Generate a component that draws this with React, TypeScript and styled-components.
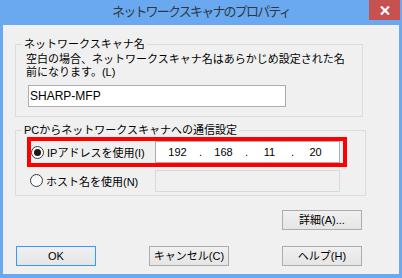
import React, { useState } from 'react';
import styled, { createGlobalStyle } from 'styled-components';

const GlobalStyle = createGlobalStyle`
  html, body {
    margin: 0;
    padding: 0;
    background: #ffffff;
  }
  body {
    font-family: "Liberation Sans", "Noto Sans CJK JP", sans-serif;
    font-size: 11px;
    color: #000000;
  }
`;

const Frame = styled.div`
  width: 402px;
  height: 278px;
  box-sizing: border-box;
  background: #6aa9f0;
  padding: 0 3px 4px 3px;
  display: flex;
  flex-direction: column;
`;

const TitleBar = styled.div`
  height: 25px;
  display: flex;
  align-items: flex-start;
  justify-content: center;
  position: relative;
`;

const Title = styled.div`
  font-family: "Noto Sans CJK JP", sans-serif;
  font-size: 13px;
  letter-spacing: -1.8px;
  line-height: 22px;
  color: #2e3844;
  margin-left: 0;
`;

const CloseButton = styled.div`
  position: absolute;
  top: 0;
  right: -1px;
  width: 31px;
  height: 20px;
  background: #c75050;
  display: flex;
  align-items: center;
  justify-content: center;
`;

const Client = styled.div`
  flex: 1;
  background: #f0f0f0;
  padding: 0 0 0 12px;
  display: flex;
  flex-direction: column;
`;

const Group = styled.fieldset<{ $width: number; $top: number }>`
  margin: ${p => p.$top}px 0 0 0;
  padding: 0;
  width: ${p => p.$width}px;
  box-sizing: border-box;
  border: 1px solid #dcdcdc;
  min-width: 0;
`;

const Legend = styled.legend`
  margin-left: 6px;
  padding: 0 2px;
  line-height: 14px;
  font-size: 11px;
`;

const Desc = styled.div`
  margin: 2px 0 0 10px;
  line-height: 13px;
  white-space: nowrap;
`;

const TextField = styled.input`
  display: block;
  margin: 6px 0 9px 12px;
  width: 258px;
  height: 22px;
  box-sizing: border-box;
  border: 1px solid #abadb3;
  background: #ffffff;
  padding: 0 0 0 1px;
  font-family: "Liberation Sans", sans-serif;
  font-size: 12px;
  color: #000;
  outline: none;
`;

const Row = styled.div<{ $highlight?: boolean }>`
  display: flex;
  align-items: center;
  justify-content: space-between;
  box-sizing: border-box;
  ${p => p.$highlight
    ? `
    margin-left: 11px;
    width: 320px;
    height: 30px;
    border: 4px solid #ff0000;
    padding-right: 3px;
  `
    : `
    margin: 2px 0 3px 14px;
    width: 310px;
    height: 23px;
  `}
`;

const RadioLabel = styled.label`
  display: flex;
  align-items: center;
  gap: 3px;
  cursor: default;
  white-space: nowrap;
`;

const RadioCircle = styled.span<{ $checked: boolean }>`
  width: 13px;
  height: 13px;
  box-sizing: border-box;
  border-radius: 50%;
  border: 1px solid #3c3c3c;
  background: linear-gradient(#f4f4f4, #ffffff);
  display: flex;
  align-items: center;
  justify-content: center;
  &::after {
    content: '';
    width: 7px;
    height: 7px;
    border-radius: 50%;
    background: ${p => (p.$checked ? '#1a1a1a' : 'transparent')};
  }
`;

const IpField = styled.div<{ $disabled?: boolean }>`
  width: 185px;
  height: 22px;
  box-sizing: border-box;
  border: 1px solid ${p => (p.$disabled ? '#d9d9d9' : '#abadb3')};
  background: ${p => (p.$disabled ? '#f0f0f0' : '#ffffff')};
  display: grid;
  grid-template-columns: 43px 3px 43px 3px 43px 3px 43px;
  align-items: center;
  font-family: "Liberation Sans", sans-serif;
  font-size: 11px;
`;

const Octet = styled.span`
  text-align: center;
`;

const Dot = styled.span`
  text-align: center;
`;

const DetailRow = styled.div`
  display: flex;
  justify-content: flex-end;
  width: 347px;
  margin-top: 14px;
`;

const ButtonRow = styled.div`
  display: flex;
  justify-content: space-between;
  width: 346px;
  margin: 16px 0 0 1px;
`;

const Button = styled.button<{ $default?: boolean }>`
  width: 80px;
  height: 20px;
  box-sizing: border-box;
  border: 1px solid ${p => (p.$default ? '#3399ff' : '#acacac')};
  background: linear-gradient(#f0f0f0, #e5e5e5);
  font-family: "Liberation Sans", "Noto Sans CJK JP", sans-serif;
  font-size: 11px;
  color: #000;
  padding: 0;
  line-height: 18px;
`;

function RadioOption(props: { checked: boolean; label: string; onSelect: () => void }) {
  return (
    <RadioLabel onClick={props.onSelect}>
      <RadioCircle $checked={props.checked} />
      <span>{props.label}</span>
    </RadioLabel>
  );
}

function AddressBox(props: { octets?: string[]; disabled?: boolean }) {
  const octets = props.octets || ['', '', '', ''];
  return (
    <IpField $disabled={props.disabled}>
      {octets.map((o, i) => (
        <React.Fragment key={i}>
          {i > 0 && <Dot>{props.disabled ? '' : '.'}</Dot>}
          <Octet>{o}</Octet>
        </React.Fragment>
      ))}
    </IpField>
  );
}

export default function App(): JSX.Element {
  const [mode, setMode] = useState<'ip' | 'host'>('ip');
  const [name, setName] = useState<string>('SHARP-MFP');

  return (
    <>
      <GlobalStyle />
      <Frame>
        <TitleBar>
          <Title>ネットワークスキャナのプロパティ</Title>
          <CloseButton>
            <svg width="10" height="9" viewBox="0 0 10 9">
              <path d="M1 0.5 L9 8.5 M9 0.5 L1 8.5" stroke="#ffffff" strokeWidth="2.2" />
            </svg>
          </CloseButton>
        </TitleBar>
        <Client>
          <Group $width={348} $top={12}>
            <Legend>ネットワークスキャナ名</Legend>
            <Desc>
              空白の場合、ネットワークスキャナ名はあらかじめ設定された名
              <br />
              前になります。(L)
            </Desc>
            <TextField value={name} onChange={e => setName(e.target.value)} />
          </Group>
          <Group $width={351} $top={6}>
            <Legend>PCからネットワークスキャナへの通信設定</Legend>
            <Row $highlight>
              <RadioOption checked={mode === 'ip'} label="IPアドレスを使用(I)" onSelect={() => setMode('ip')} />
              <AddressBox octets={['192', '168', '11', '20']} />
            </Row>
            <Row>
              <RadioOption checked={mode === 'host'} label="ホスト名を使用(N)" onSelect={() => setMode('host')} />
              <AddressBox disabled />
            </Row>
          </Group>
          <DetailRow>
            <Button>詳細(A)...</Button>
          </DetailRow>
          <ButtonRow>
            <Button $default>OK</Button>
            <Button>キャンセル(C)</Button>
            <Button>ヘルプ(H)</Button>
          </ButtonRow>
        </Client>
      </Frame>
    </>
  );
}
